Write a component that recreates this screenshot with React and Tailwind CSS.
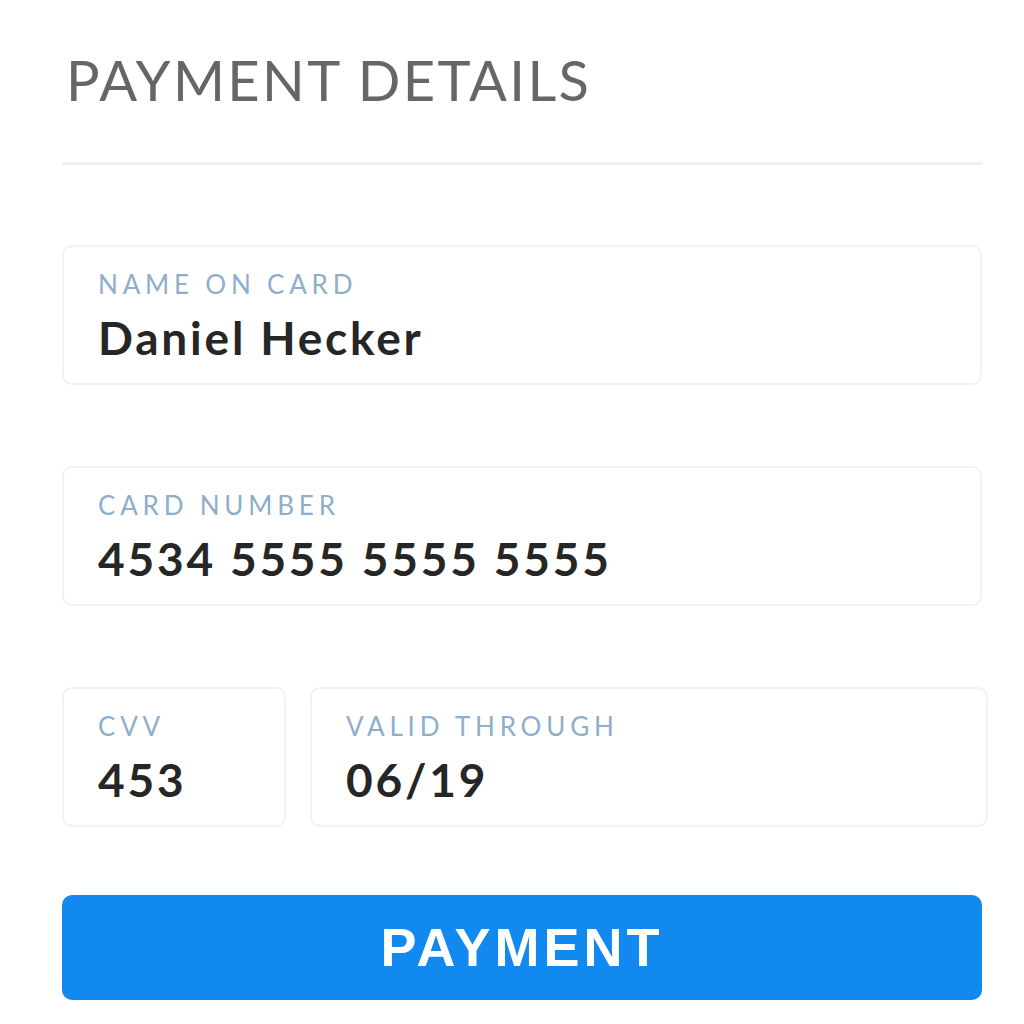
import React from "react";

function Field({ label, value, className = "" }) {
    return (
        <div className={`rounded-[10px] border-2 border-[#f0f2f4] bg-white pl-[34px] pt-[22px] pb-[22px] ${className}`}>
            <div className="text-[26px] leading-[30px] text-[#8eaecb] tracking-[4.8px]" style={{ fontFamily: "Lato, sans-serif" }}>
                {label}
            </div>
            <div className="mt-[16px] text-[46px] leading-[46px] font-bold text-[#262626] tracking-[2.8px]" style={{ fontFamily: "Lato, sans-serif" }}>
                {value}
            </div>
        </div>
    );
}

export default function App() {
    return (
        <div className="min-h-[1024px] w-[1024px] bg-white pl-[62px] pr-[42px] pt-[48px]" style={{ fontFamily: "Lato, sans-serif" }}>
            <h1 className="text-[56px] leading-[64px] text-[#666666] tracking-[2.4px] pl-[4px]">PAYMENT DETAILS</h1>
            <div className="mt-[50px] h-[3px] bg-[#f0f0f0]" />

            <div className="mt-[80px] flex flex-col gap-[81px]">
                <Field label="NAME ON CARD" value="Daniel Hecker" />
                <Field label="CARD NUMBER" value="4534 5555 5555 5555" />
                <div className="flex gap-[24px] -mr-[6px]">
                    <Field label="CVV" value="453" className="w-[224px]" />
                    <Field label="VALID THROUGH" value="06/19" className="flex-1" />
                </div>
            </div>

            <button
                type="button"
                className="mt-[68px] flex h-[105px] w-full items-center justify-center rounded-[10px] bg-[#1289ef] text-[54px] font-bold tracking-[4px] text-white"
                style={{ fontFamily: "'Liberation Sans', Arial, sans-serif" }}
            >
                PAYMENT
            </button>
        </div>
    );
}
